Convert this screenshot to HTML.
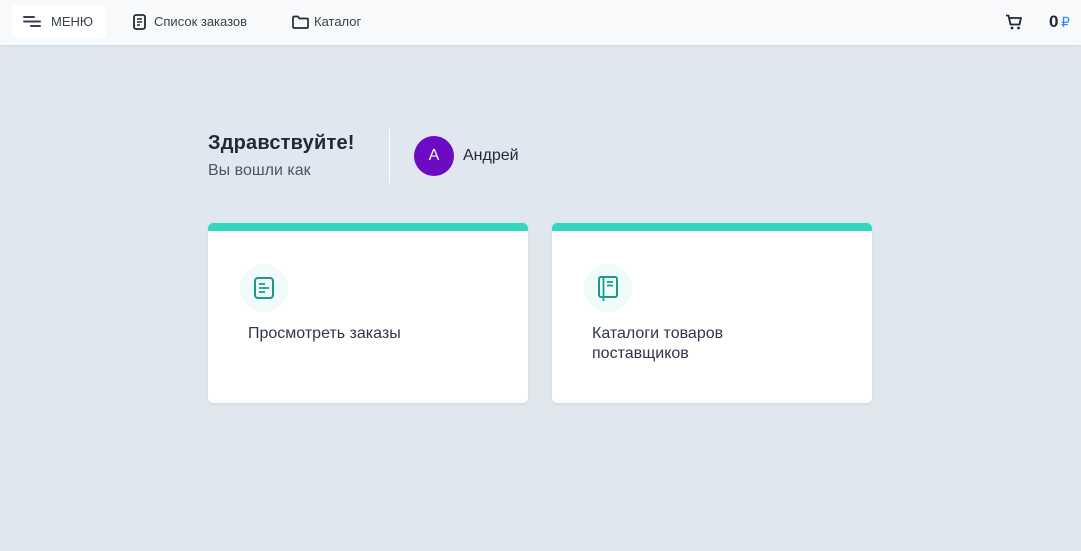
<!DOCTYPE html>
<html><head><meta charset="utf-8"><style>
*{margin:0;padding:0;box-sizing:border-box}
body{width:1081px;height:551px;background:#e1e7ef;font-family:"Liberation Sans",sans-serif;color:#1f2937;position:relative;overflow:hidden}
.top{position:absolute;left:0;top:0;width:1081px;height:45px;background:#f8f9fb;box-shadow:0 1px 2px rgba(0,0,0,.06)}
.menu{position:absolute;left:12px;top:5px;width:94px;height:33px;background:#fff;border-radius:5px}
.t{position:absolute;font-size:13px;color:#374151}
.card{position:absolute;top:223px;width:320px;height:180px;background:#fff;border-radius:5px;border-top:8px solid #33d6c1;box-shadow:0 1px 3px rgba(0,0,0,.08)}
.ic{position:absolute;left:32px;top:33px;width:48px;height:48px;border-radius:50%;background:#effcf9}
.ct{position:absolute;left:40px;top:93px;font-size:16px;line-height:20px;color:#2d3748}
</style></head><body>
<div class="top">
 <div class="menu">
  <svg style="position:absolute;left:11px;top:10px" width="19" height="13"><g stroke="#374151" stroke-width="2" stroke-linecap="round"><line x1="1" y1="2" x2="11" y2="2"/><line x1="1" y1="6.5" x2="17" y2="6.5"/><line x1="8" y1="11" x2="17" y2="11"/></g></svg>
  <span class="t" style="left:39px;top:9px">МЕНЮ</span>
 </div>
 <svg style="position:absolute;left:133px;top:14px" width="13" height="16"><rect x="1" y="1" width="11" height="14" rx="2" fill="none" stroke="#1f2937" stroke-width="1.8"/><g stroke="#1f2937" stroke-width="1.5"><line x1="4" y1="5" x2="9" y2="5"/><line x1="4" y1="8" x2="9" y2="8"/><line x1="4" y1="11" x2="7" y2="11"/></g></svg>
 <span class="t" style="left:154px;top:14px">Список заказов</span>
 <svg style="position:absolute;left:292px;top:15px" width="17" height="14"><path d="M1 2.5a1 1 0 0 1 1-1h4l1.5 2h7.5a1 1 0 0 1 1 1v7.5a1 1 0 0 1-1 1H2a1 1 0 0 1-1-1z" fill="none" stroke="#1f2937" stroke-width="1.7"/></svg>
 <span class="t" style="left:314px;top:14px">Каталог</span>
 <svg style="position:absolute;left:1005px;top:14px" width="18" height="16"><path d="M1 1.5h2.5l2 9h9l1.5-6.5H4.5" fill="none" stroke="#1f2937" stroke-width="1.8" stroke-linejoin="round"/><circle cx="7" cy="14" r="1.4" fill="#1f2937"/><circle cx="13.5" cy="14" r="1.4" fill="#1f2937"/></svg>
 <span style="position:absolute;left:1049px;top:12px;font-size:17px;font-weight:bold;color:#1f2937">0</span>
 <span style="position:absolute;left:1061px;top:14px;font-size:14px;color:#3b82f6">₽</span>
</div>
<div style="position:absolute;left:208px;top:132px;font-size:20px;font-weight:bold;color:#1f2937;letter-spacing:0.2px">Здравствуйте!</div>
<div style="position:absolute;left:208px;top:162px;font-size:16px;color:#4b5563">Вы вошли как</div>
<div style="position:absolute;left:389px;top:129px;width:1px;height:54px;background:#fff"></div>
<div style="position:absolute;left:414px;top:136px;width:40px;height:40px;border-radius:50%;background:#6d0ac4;color:#fff;font-size:16px;text-align:center;line-height:40px">A</div>
<div style="position:absolute;left:463px;top:147px;font-size:16px;color:#1f2937">Андрей</div>
<div class="card" style="left:208px">
 <div class="ic"><svg style="position:absolute;left:14px;top:13px" width="20" height="22"><rect x="1" y="1" width="18" height="20" rx="3" fill="none" stroke="#1a9c8c" stroke-width="2"/><g stroke="#1a9c8c" stroke-width="1.8"><line x1="5" y1="7" x2="11" y2="7"/><line x1="5" y1="11" x2="15" y2="11"/><line x1="5" y1="15" x2="11" y2="15"/></g></svg></div>
 <div class="ct">Просмотреть заказы</div>
</div>
<div class="card" style="left:552px">
 <div class="ic"><svg style="position:absolute;left:14px;top:12px" width="20" height="26"><rect x="1" y="1" width="18" height="20" rx="2" fill="none" stroke="#1a9c8c" stroke-width="2"/><line x1="5.5" y1="1" x2="5.5" y2="25" stroke="#1a9c8c" stroke-width="1.8"/><g stroke="#1a9c8c" stroke-width="1.8"><line x1="9" y1="6" x2="15" y2="6"/><line x1="9" y1="9.5" x2="15" y2="9.5"/></g></svg></div>
 <div class="ct">Каталоги товаров<br>поставщиков</div>
</div>
</body></html>
